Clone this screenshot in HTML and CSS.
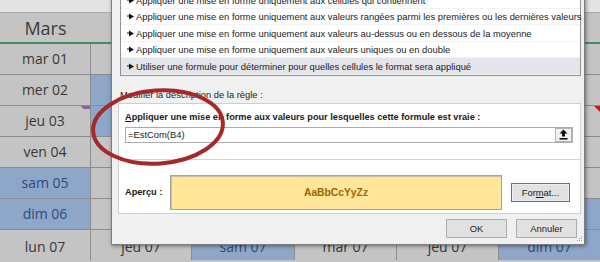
FILE: index.html
```html
<!DOCTYPE html>
<html lang="fr">
<head>
<meta charset="utf-8">
<title>Mise en forme conditionnelle</title>
<link rel="stylesheet" href="styles.css">
</head>
<body>
<div class="sheet">
  <div class="toprow"></div>
  <div class="head">
    <div>Mars</div><div>Avril</div><div>Mai</div><div>Juin</div><div>Juillet</div><div>Août</div>
  </div>
  <div class="days">
    <div>mar 01</div><div>ven 01</div><div class="we">dim 01</div><div>mer 01</div><div>ven 01</div><div>lun 01</div>
    <div>mer 02</div><div class="we">sam 02</div><div>lun 02</div><div>jeu 02</div><div class="we">sam 02</div><div>mar 02</div>
    <div class="mark">jeu 03</div><div class="we">dim 03</div><div>mar 03</div><div>ven 03</div><div class="we">dim 03</div><div class="note">mer 03</div>
    <div>ven 04</div><div>lun 04</div><div>mer 04</div><div class="we">sam 04</div><div>lun 04</div><div>jeu 04</div>
    <div class="we">sam 05</div><div>mar 05</div><div>jeu 05</div><div class="we">dim 05</div><div>mar 05</div><div>ven 05</div>
    <div class="we">dim 06</div><div>mer 06</div><div>ven 06</div><div>lun 06</div><div>mer 06</div><div class="we">sam 06</div>
    <div class="last">lun 07</div><div class="last">jeu 07</div><div class="we last">sam 07</div><div class="last">mar 07</div><div class="last">jeu 07</div><div class="we last">dim 07</div>
  </div>
</div>

<div class="dialog">
  <ul class="rules">
    <li><svg class="arr" width="7" height="7" viewBox="0 0 7 7"><path d="M0 3h2.5" stroke="#111" stroke-width="1"/><path d="M2 0.5L7 3.5L2 6.5Z" fill="#111"/></svg>Appliquer une mise en forme uniquement aux cellules qui contiennent</li>
    <li><svg class="arr" width="7" height="7" viewBox="0 0 7 7"><path d="M0 3h2.5" stroke="#111" stroke-width="1"/><path d="M2 0.5L7 3.5L2 6.5Z" fill="#111"/></svg>Appliquer une mise en forme uniquement aux valeurs rangées parmi les premières ou les dernières valeurs</li>
    <li><svg class="arr" width="7" height="7" viewBox="0 0 7 7"><path d="M0 3h2.5" stroke="#111" stroke-width="1"/><path d="M2 0.5L7 3.5L2 6.5Z" fill="#111"/></svg>Appliquer une mise en forme uniquement aux valeurs au-dessus ou en dessous de la moyenne</li>
    <li><svg class="arr" width="7" height="7" viewBox="0 0 7 7"><path d="M0 3h2.5" stroke="#111" stroke-width="1"/><path d="M2 0.5L7 3.5L2 6.5Z" fill="#111"/></svg>Appliquer une mise en forme uniquement aux valeurs uniques ou en double</li>
    <li class="sel"><svg class="arr" width="7" height="7" viewBox="0 0 7 7"><path d="M0 3h2.5" stroke="#111" stroke-width="1"/><path d="M2 0.5L7 3.5L2 6.5Z" fill="#111"/></svg>Utiliser une formule pour déterminer pour quelles cellules le format sera appliqué</li>
  </ul>
  <div class="lbl">Modifier la description de la règle :</div>
  <div class="panel">
    <div class="panel-top">
      <div class="bold"><u>A</u>ppliquer une mise en forme aux valeurs pour lesquelles cette formule est vraie :</div>
      <div class="input">
        <span>=EstCom(B4)</span>
        <span class="pick"><svg width="9" height="11" viewBox="0 0 9 11"><path d="M4.5 0.5L8.5 4.5H6V7.5H3V4.5H0.5Z" fill="#111"/><rect x="0.5" y="9" width="8" height="1.6" fill="#111"/></svg></span>
      </div>
    </div>
    <div class="panel-bot">
      <div class="bold ap">Aperçu :</div>
      <div class="preview">AaBbCcYyZz</div>
      <div class="btn focus">For<u>m</u>at...</div>
    </div>
  </div>
  <div class="actions">
    <div class="btn">OK</div>
    <div class="btn">Annuler</div>
  </div>
  <svg class="grip" width="7" height="7" viewBox="0 0 7 7"><g fill="#a0a0a0"><rect x="5" y="0" width="1" height="1"/><rect x="3" y="2" width="1" height="1"/><rect x="5" y="2" width="1" height="1"/><rect x="1" y="4" width="1" height="1"/><rect x="3" y="4" width="1" height="1"/><rect x="5" y="4" width="1" height="1"/></g></svg>
</div>

<svg class="circle" width="600" height="262" viewBox="0 0 600 262">
  <ellipse cx="158" cy="127" rx="65" ry="36.5" transform="rotate(-4 158 127)" fill="none" stroke="#a3292b" stroke-width="4"/>
</svg>
</body>
</html>
```

FILE: styles.css
```css
html, body {
  margin: 0;
  padding: 0;
}
body {
  width: 600px;
  height: 262px;
  overflow: hidden;
  position: relative;
  background: #c4c4c4;
  font-family: "Open Sans", "Liberation Sans", sans-serif;
}

/* ---------- spreadsheet ---------- */
.toprow {
  height: 12px;
  background: #e3e3e3;
  border-bottom: 1px solid #a8a8a8;
}
.head {
  display: grid;
  grid-template-columns: 91px 101px 103px 102px 102px 101px;
  height: 29px;
  background: #c4c4c4;
  border-bottom: 2px solid #3e9160;
}
.head div {
  text-align: center;
  font-size: 18px;
  line-height: 31px;
  color: #3c3c3c;
}
.days {
  display: grid;
  grid-template-columns: 90px 100px 102px 101px 101px 101px;
  grid-auto-rows: 30px;
  gap: 1px;
  background: #8c8c8c;
}
.days div {
  position: relative;
  background: #c4c4c4;
  text-align: center;
  font-size: 14px;
  line-height: 30px;
  color: #383838;
}
.days div.last {
  line-height: 33px;
}
.days div.we {
  background: #8ea6c8;
  color: #2d4a7e;
}
.days .note::after {
  content: "";
  position: absolute;
  top: 0;
  right: 0;
  border-top: 6px solid #d0161c;
  border-left: 6px solid transparent;
}
.days .mark::after {
  content: "";
  position: absolute;
  top: 0;
  right: 0;
  width: 9px;
  height: 3px;
  background: #8a64a0;
  clip-path: polygon(0 0, 100% 0, 100% 100%, 30% 100%);
}

/* ---------- dialog ---------- */
.dialog {
  position: absolute;
  left: 111px;
  top: -40px;
  width: 474px;
  height: 285px;
  box-sizing: border-box;
  background: #f0f0f0;
  border: 1px solid #7d7d7d;
  box-shadow: 1px 1px 4px rgba(0, 0, 0, 0.45);
  font-family: "Liberation Sans", Arial, sans-serif;
  font-size: 9.4px;
  color: #1b1b1b;
}
.rules {
  list-style: none;
  margin: 30px 0 0 8px;
  padding: 0;
  width: 461px;
  box-sizing: border-box;
  border: 1px solid #8e9299;
  background: #fff;
}
.rules li {
  display: flex;
  align-items: center;
  height: 16.5px;
  padding-left: 6px;
  white-space: nowrap;
  box-shadow: inset 0 -1px 0 #f3f3f3;
}
.rules li.sel {
  background: #e4e5eb;
}
.arr {
  flex: none;
  margin-right: 2px;
}
.lbl {
  margin: 12px 0 0 8px;
  line-height: 14px;
}
.panel {
  margin: 1px 0 0 6px;
  width: 463px;
  box-sizing: border-box;
  background: #fff;
  border: 1px solid #cfcfcf;
}
.panel-top {
  padding: 6px 7px 16px 6px;
  border-bottom: 1px solid #d4d4d4;
}
.bold {
  font-weight: bold;
  font-size: 9.2px;
  line-height: 14px;
  white-space: nowrap;
}
.input {
  margin-top: 3px;
  height: 16px;
  box-sizing: border-box;
  border: 1px solid #acacac;
  display: flex;
  align-items: center;
  justify-content: space-between;
  padding-left: 2px;
}
.pick {
  width: 17px;
  height: 14px;
  box-sizing: border-box;
  border: 1px solid #b4b4b4;
  background: #f2f2f2;
  display: flex;
  align-items: center;
  justify-content: center;
}
.panel-bot {
  display: flex;
  align-items: center;
  padding: 15px 0 3px 6px;
}
.ap {
  width: 45px;
}
.preview {
  width: 332px;
  height: 35px;
  box-sizing: border-box;
  background: #ffe699;
  border: 1px solid #a3a3a3;
  box-shadow: inset 1px 1px 0 #c9c2a6;
  display: flex;
  align-items: center;
  justify-content: center;
  font-weight: bold;
  font-size: 10.3px;
  color: #9c6500;
  margin-right: 9px;
}
.btn {
  width: 61px;
  height: 19px;
  box-sizing: border-box;
  border: 1px solid #adadad;
  background: #e1e1e1;
  display: flex;
  align-items: center;
  justify-content: center;
  color: #1b1b1b;
}
.btn.focus {
  width: 59px;
  border: 1px solid #2f7ed6;
  box-shadow: inset 0 0 0 1px #e9eef5;
}
.actions {
  display: flex;
  justify-content: flex-end;
  gap: 9px;
  margin-top: 5px;
  padding-right: 7px;
}
.grip {
  position: absolute;
  right: 1px;
  bottom: 1px;
}

/* ---------- hand-drawn circle ---------- */
.circle {
  position: absolute;
  left: 0;
  top: 0;
  pointer-events: none;
}
```
